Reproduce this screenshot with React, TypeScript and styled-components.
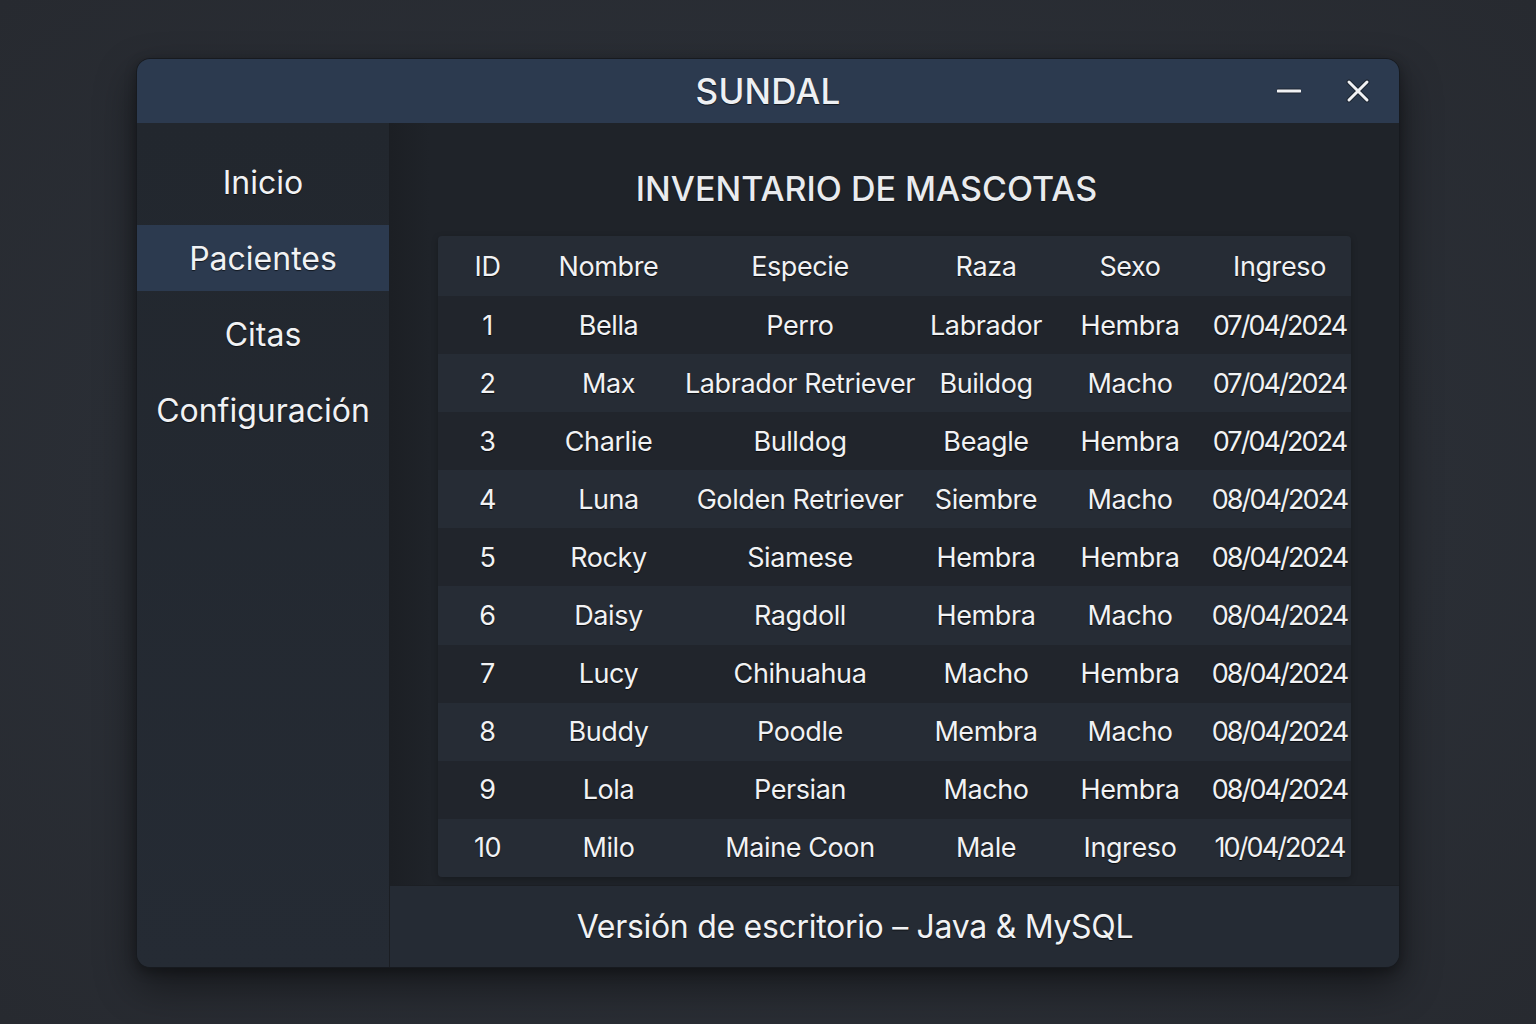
import React from "react";
import styled, { createGlobalStyle } from "styled-components";

const Global = createGlobalStyle`
  html, body { margin: 0; padding: 0; }
  body {
    background: #2a2e35;
    font-family: Inter, "Noto Sans", "Liberation Sans", sans-serif;
    color: #f3f4f6;
  }
`;

const Page = styled.div`
  width: 1536px;
  height: 1024px;
  display: flex;
  align-items: flex-start;
  justify-content: center;
  padding-top: 58px;
  box-sizing: border-box;
  background: radial-gradient(ellipse at center, #2c3038 0%, #2a2e35 60%, #272a30 100%);
`;

const Window = styled.div`
  width: 1264px;
  height: 910px;
  border-radius: 14px;
  overflow: hidden;
  display: flex;
  flex-direction: column;
  background: #1f2329;
  border: 1px solid #171a1f;
  box-sizing: border-box;
  box-shadow: 0 18px 40px rgba(0, 0, 0, 0.45), 0 4px 12px rgba(0, 0, 0, 0.3);
`;

const TitleBar = styled.div`
  height: 64px;
  flex: 0 0 64px;
  background: #2c3a4f;
  position: relative;
  display: flex;
  align-items: center;
  justify-content: center;
`;

const Title = styled.div`
  font-size: 35px;
  font-weight: 500;
  letter-spacing: 0.2px;
  color: #eef0f3;
  text-shadow: 0 1px 1px rgba(0, 0, 0, 0.6);
`;

const Controls = styled.div`
  position: absolute;
  right: 29px;
  top: 0;
  height: 100%;
  display: flex;
  align-items: center;
  gap: 45px;
`;

const Body = styled.div`
  flex: 1;
  display: flex;
  min-height: 0;
`;

const Sidebar = styled.nav`
  width: 253px;
  flex: 0 0 253px;
  background: linear-gradient(180deg, #22272e 0%, #252b34 100%);
  border-right: 1px solid #1b1e23;
  padding-top: 26px;
  display: flex;
  flex-direction: column;
  gap: 10px;
  box-sizing: border-box;
`;

const NavItem = styled.div<{ $active?: boolean }>`
  height: 66px;
  display: flex;
  align-items: center;
  justify-content: center;
  font-size: 32px;
  color: #f1f2f4;
  background: ${(p) => (p.$active ? "#2c3a4f" : "transparent")};
  text-shadow: 0 1px 1px rgba(0, 0, 0, 0.6);
`;

const Main = styled.main`
  flex: 1;
  display: flex;
  flex-direction: column;
  background: linear-gradient(90deg, #1c1f24 0px, #1f2329 40px, #1f2329 100%);
`;

const Content = styled.div`
  flex: 1;
  padding: 0 49px 0 48px;
  display: flex;
  flex-direction: column;
`;

const Heading = styled.h1`
  margin: 0;
  height: 113px;
  display: flex;
  align-items: center;
  justify-content: center;
  padding: 17px 56px 0 0;
  box-sizing: border-box;
  font-size: 34px;
  font-weight: 500;
  color: #e9ebee;
  text-shadow: 0 1px 1px rgba(0, 0, 0, 0.6);
`;

const Table = styled.div`
  display: grid;
  grid-template-columns: 99px 143px 240px 132px 156px 143px;
  border-radius: 4px;
  overflow: hidden;
  box-shadow: 0 2px 6px rgba(0, 0, 0, 0.25);
`;

const Row = styled.div<{ $shade: "head" | "odd" | "even" }>`
  display: contents;
  & > div {
    background: ${(p) =>
      p.$shade === "head" ? "#262c35" : p.$shade === "odd" ? "#21252c" : "#262c35"};
    height: ${(p) => (p.$shade === "head" ? "60px" : "58.1px")};
  }
`;

const Cell = styled.div<{ $date?: boolean }>`
  display: flex;
  align-items: center;
  justify-content: center;
  white-space: nowrap;
  font-size: 27px;
  letter-spacing: ${(p) => (p.$date ? "-1.9px" : "-0.4px")};
  color: #f1f2f4;
  text-shadow: 0 1px 1px rgba(0, 0, 0, 0.7);
`;

const Footer = styled.footer`
  height: 81px;
  flex: 0 0 81px;
  background: #252b34;
  display: flex;
  align-items: center;
  justify-content: center;
  padding-right: 80px;
  font-size: 32px;
  letter-spacing: -0.3px;
  color: #f1f2f4;
  text-shadow: 0 1px 1px rgba(0, 0, 0, 0.6);
  box-shadow: 0 -1px 0 #1c1f24;
`;

const headers = ["ID", "Nombre", "Especie", "Raza", "Sexo", "Ingreso"];

const rows: string[][] = [
  ["1", "Bella", "Perro", "Labrador", "Hembra", "07/04/2024"],
  ["2", "Max", "Labrador Retriever", "Buildog", "Macho", "07/04/2024"],
  ["3", "Charlie", "Bulldog", "Beagle", "Hembra", "07/04/2024"],
  ["4", "Luna", "Golden Retriever", "Siembre", "Macho", "08/04/2024"],
  ["5", "Rocky", "Siamese", "Hembra", "Hembra", "08/04/2024"],
  ["6", "Daisy", "Ragdoll", "Hembra", "Macho", "08/04/2024"],
  ["7", "Lucy", "Chihuahua", "Macho", "Hembra", "08/04/2024"],
  ["8", "Buddy", "Poodle", "Membra", "Macho", "08/04/2024"],
  ["9", "Lola", "Persian", "Macho", "Hembra", "08/04/2024"],
  ["10", "Milo", "Maine Coon", "Male", "Ingreso", "10/04/2024"],
];

const MinimizeIcon = () => (
  <svg width="24" height="24" viewBox="0 0 24 24">
    <line x1="1" y1="12" x2="23" y2="12" stroke="#0f1218" strokeWidth="5" strokeLinecap="round" opacity="0.5" />
    <line x1="1" y1="12" x2="23" y2="12" stroke="#f1f2f4" strokeWidth="3" strokeLinecap="round" />
  </svg>
);

const CloseIcon = () => (
  <svg width="24" height="24" viewBox="0 0 24 24">
    <path d="M3 3 L21 21 M21 3 L3 21" stroke="#0f1218" strokeWidth="5" strokeLinecap="round" opacity="0.5" />
    <path d="M3 3 L21 21 M21 3 L3 21" stroke="#f1f2f4" strokeWidth="3" strokeLinecap="round" />
  </svg>
);

export default function App() {
  return (
    <>
      <Global />
      <Page>
        <Window>
          <TitleBar>
            <Title>SUNDAL</Title>
            <Controls>
              <MinimizeIcon />
              <CloseIcon />
            </Controls>
          </TitleBar>
          <Body>
            <Sidebar>
              <NavItem>Inicio</NavItem>
              <NavItem $active>Pacientes</NavItem>
              <NavItem>Citas</NavItem>
              <NavItem>Configuración</NavItem>
            </Sidebar>
            <Main>
              <Content>
                <Heading>INVENTARIO DE MASCOTAS</Heading>
                <Table>
                  <Row $shade="head">
                    {headers.map((h) => (
                      <Cell key={h}>{h}</Cell>
                    ))}
                  </Row>
                  {rows.map((r, i) => (
                    <Row key={i} $shade={i % 2 === 0 ? "odd" : "even"}>
                      {r.map((c, j) => (
                        <Cell key={j} $date={j === 5}>
                          {c}
                        </Cell>
                      ))}
                    </Row>
                  ))}
                </Table>
              </Content>
              <Footer>Versión de escritorio – Java &amp; MySQL</Footer>
            </Main>
          </Body>
        </Window>
      </Page>
    </>
  );
}
